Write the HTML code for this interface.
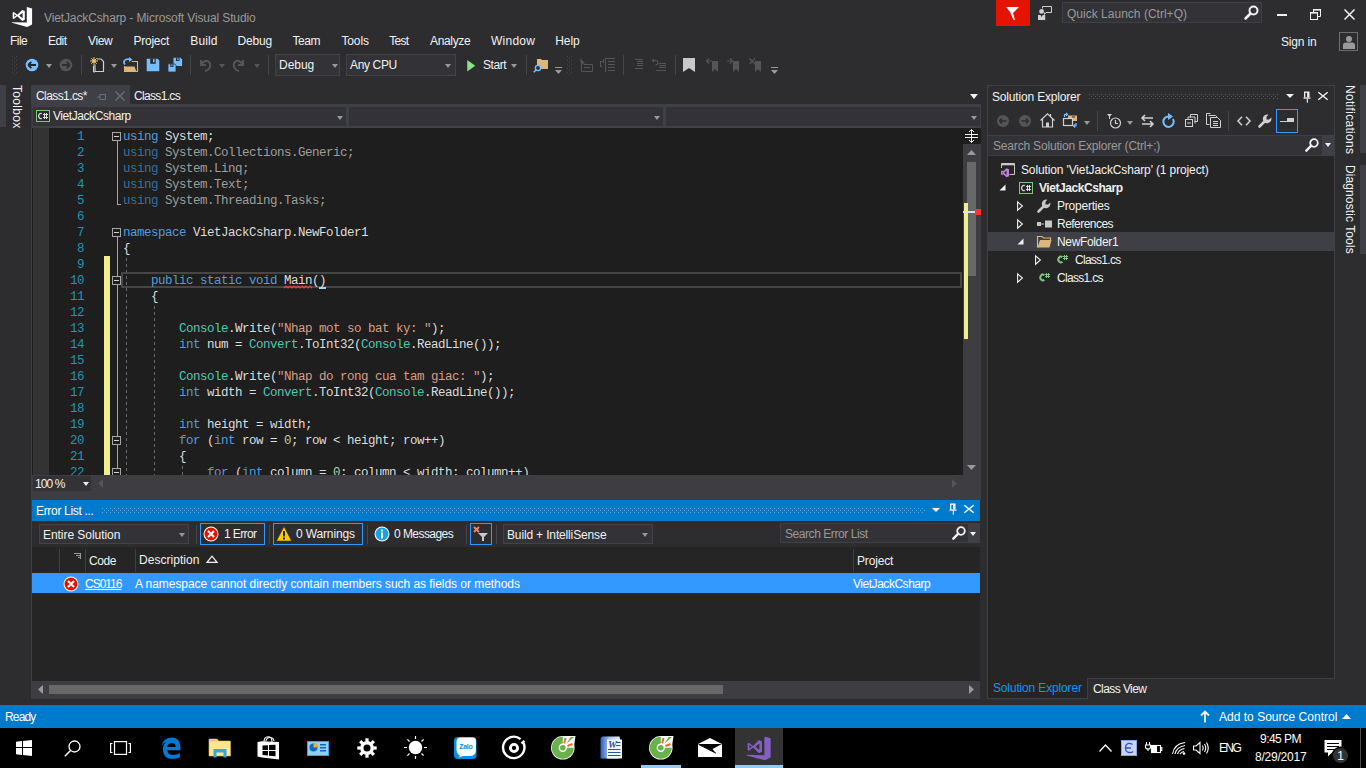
<!DOCTYPE html>
<html><head><meta charset="utf-8">
<style>
*{margin:0;padding:0;box-sizing:border-box}
html,body{width:1366px;height:768px;overflow:hidden;background:#2d2d30;font-family:"Liberation Sans",sans-serif;font-size:12px;color:#f1f1f1}
.a{position:absolute}
.t{position:absolute;white-space:nowrap;line-height:1}
svg{position:absolute;overflow:visible}
.code{position:absolute;left:123px;top:128px;font-family:"Liberation Mono",monospace;font-size:12.5px;letter-spacing:-0.5px;line-height:16px;color:#dcdcdc;white-space:pre}
.k{color:#569cd6}.ty{color:#4ec9b0}.s{color:#d69d85}.n{color:#b5cea8}.dk{color:#3a6e9c}.dp{color:#9e9e9e}
.ln{position:absolute;left:40px;width:44px;text-align:right;font-family:"Liberation Mono",monospace;font-size:12.5px;letter-spacing:-0.5px;line-height:16px;color:#2b91af;white-space:pre}
</style></head><body>

<svg style="left:8px;top:4px" width="30" height="26" viewBox="0 0 30 26"><path fill="#fff" fill-rule="evenodd" d="M18.8 2.9 L24.1 4.4 L24.1 20.6 L19.2 22.9 L3.9 18.8 L3.9 18.2 L18.8 18.6 Z M4.7 8.6 L5.8 8.1 L9.3 10.8 L14.2 5.9 L16.8 7.1 L16.8 15.8 L14.2 16.9 L9.3 12.2 L5.8 14.9 L4.7 14.4 Z M6.3 9.9 L8.2 11.5 L6.3 13.1 Z M14.6 8.7 L14.6 14.2 L11.2 11.5 Z"/></svg>
<div class="t" style="left:44px;top:11.84px;font-size:12px;color:#999999;letter-spacing:-0.119px;">VietJackCsharp - Microsoft Visual Studio</div>
<div class="a" style="left:996px;top:0px;width:34px;height:26px;background:#e51400;"></div>
<svg style="left:1005px;top:6px" width="15" height="15" viewBox="0 0 15 15"><path fill="#fff" d="M1 1 H14 L8 7 L10 14 L8.5 14 L5 6 Z"/></svg>
<svg style="left:1037px;top:5px" width="16" height="16" viewBox="0 0 16 16"><circle cx="4.6" cy="6.4" r="2.4" fill="#d0d0d0"/><path d="M1 10 H3.5 L4.6 12 L5.7 10 H8.2 V15 H1 Z" fill="#d0d0d0"/><path d="M5.5 3.5 V1.5 H14.5 V7.5 H9 L7.5 9.5 V7.5" fill="none" stroke="#d0d0d0" stroke-width="1"/></svg>
<div class="a" style="left:1062px;top:2px;width:200px;height:21px;background:#333337;border:1px solid #3f3f46;"></div>
<div class="t" style="left:1067px;top:7.84px;font-size:12px;color:#999999;letter-spacing:0.014px;">Quick Launch (Ctrl+Q)</div>
<svg style="left:1244px;top:5px" width="15" height="15" viewBox="0 0 15 15"><circle cx="9.5" cy="5.5" r="4" fill="none" stroke="#f1f1f1" stroke-width="2"/><path d="M6.5 8.5 L1.5 13.5" stroke="#f1f1f1" stroke-width="2.5" stroke-linecap="round"/></svg>
<div class="a" style="left:1277px;top:14px;width:10px;height:2px;background:#f1f1f1;"></div>
<svg style="left:1310px;top:9px" width="11" height="11" viewBox="0 0 11 11"><path d="M3.5 3 V0.5 H10.5 V7.5 H8" fill="none" stroke="#f1f1f1" stroke-width="1"/><rect x="3" y="0" width="8" height="1.6" fill="#f1f1f1"/><rect x="0.5" y="3.5" width="7" height="7" fill="none" stroke="#f1f1f1" stroke-width="1"/><rect x="0" y="3" width="8" height="1.6" fill="#f1f1f1"/></svg>
<svg style="left:1344px;top:9px" width="11" height="11" viewBox="0 0 11 11"><path d="M0.5 0.5 L10.5 10.5 M10.5 0.5 L0.5 10.5" stroke="#f1f1f1" stroke-width="1.5"/></svg>
<div class="t" style="left:10px;top:34.84px;font-size:12px;color:#f1f1f1;letter-spacing:-0.554px;">File</div>
<div class="t" style="left:48px;top:34.84px;font-size:12px;color:#f1f1f1;letter-spacing:-0.548px;">Edit</div>
<div class="t" style="left:88px;top:34.84px;font-size:12px;color:#f1f1f1;letter-spacing:-0.376px;">View</div>
<div class="t" style="left:133.5px;top:34.84px;font-size:12px;color:#f1f1f1;letter-spacing:-0.252px;">Project</div>
<div class="t" style="left:190.3px;top:34.84px;font-size:12px;color:#f1f1f1;letter-spacing:0.123px;">Build</div>
<div class="t" style="left:237.6px;top:34.84px;font-size:12px;color:#f1f1f1;letter-spacing:-0.172px;">Debug</div>
<div class="t" style="left:292.5px;top:34.84px;font-size:12px;color:#f1f1f1;letter-spacing:-0.449px;">Team</div>
<div class="t" style="left:341.4px;top:34.84px;font-size:12px;color:#f1f1f1;letter-spacing:-0.103px;">Tools</div>
<div class="t" style="left:389.2px;top:34.84px;font-size:12px;color:#f1f1f1;letter-spacing:-0.691px;">Test</div>
<div class="t" style="left:430px;top:34.84px;font-size:12px;color:#f1f1f1;letter-spacing:-0.336px;">Analyze</div>
<div class="t" style="left:491px;top:34.84px;font-size:12px;color:#f1f1f1;letter-spacing:0.257px;">Window</div>
<div class="t" style="left:555.3px;top:34.84px;font-size:12px;color:#f1f1f1;letter-spacing:-0.102px;">Help</div>
<div class="t" style="left:1281px;top:36.34px;font-size:12px;color:#f1f1f1;letter-spacing:-0.170px;">Sign in</div>
<div class="a" style="left:1339px;top:32px;width:19px;height:19px;background:transparent;border:1px solid #6d6d70;"></div>
<svg style="left:1342px;top:35px" width="14" height="14" viewBox="0 0 14 14"><circle cx="7" cy="4" r="3" fill="#9a9a9a"/><path d="M1 14 V10 Q1 7.5 4 7.5 H10 Q13 7.5 13 10 V14 Z" fill="#9a9a9a"/></svg>
<svg style="left:12px;top:56px" width="6" height="18" fill="#46464a"><rect x="0" y="0" width="1" height="1"/><rect x="4" y="0" width="1" height="1"/><rect x="2" y="2" width="1" height="1"/><rect x="0" y="4" width="1" height="1"/><rect x="4" y="4" width="1" height="1"/><rect x="2" y="6" width="1" height="1"/><rect x="0" y="8" width="1" height="1"/><rect x="4" y="8" width="1" height="1"/><rect x="2" y="10" width="1" height="1"/><rect x="0" y="12" width="1" height="1"/><rect x="4" y="12" width="1" height="1"/><rect x="2" y="14" width="1" height="1"/><rect x="0" y="16" width="1" height="1"/><rect x="4" y="16" width="1" height="1"/><rect x="2" y="18" width="1" height="1"/></svg>
<svg style="left:25px;top:58px" width="14" height="14" viewBox="0 0 14 14"><circle cx="7" cy="7" r="6.3" fill="#75beff"/><path d="M3.2 7 H11 M3.2 7 L6.3 3.9 M3.2 7 L6.3 10.1" stroke="#252526" stroke-width="1.8" fill="none"/></svg>
<svg style="left:46px;top:64px" width="6" height="4" viewBox="0 0 6 3.5" preserveAspectRatio="none"><path d="M0 0 H6 L3 3.5 Z" fill="#999999"/></svg>
<svg style="left:59px;top:58px" width="14" height="14" viewBox="0 0 14 14"><circle cx="7" cy="7" r="6.3" fill="#555555"/><path d="M10.8 7 H3 M10.8 7 L7.7 3.9 M10.8 7 L7.7 10.1" stroke="#2d2d30" stroke-width="1.8" fill="none"/></svg>
<div class="a" style="left:81px;top:55px;width:1px;height:20px;background:#46464a;"></div>
<svg style="left:90px;top:57px" width="15" height="16" viewBox="0 0 15 16"><path d="M5 7.5 V14.5 H13.5 V4.5 L11 2 H7" fill="#252526" stroke="#d0d0d0" stroke-width="1.2"/><path d="M3.5 8.5 V15 H5" fill="none" stroke="#d0d0d0" stroke-width="1"/><path d="M4 0 V8 M0 4 H8 M1.2 1.2 L6.8 6.8 M6.8 1.2 L1.2 6.8" stroke="#f0c064" stroke-width="1"/><circle cx="4" cy="4" r="1.8" fill="#f0c064"/></svg>
<svg style="left:111px;top:64px" width="6" height="4" viewBox="0 0 6 3.5" preserveAspectRatio="none"><path d="M0 0 H6 L3 3.5 Z" fill="#999999"/></svg>
<svg style="left:118px;top:52px" width="70" height="26" viewBox="0 0 70 26"><path d="M13.8 9.5 H19.5 V19.5 H6.5 V14" fill="none" stroke="#dcb67a" stroke-width="1.1"/><path d="M6 14.5 H16.5 L18.5 19.8 H7.5 Z" fill="#dcb67a"/><path d="M7 12.5 Q5 10.5 6.5 8.5 Q8.5 6.5 12.5 7.5" fill="none" stroke="#75beff" stroke-width="1.6"/><path d="M11 5 L14.5 7.8 L11 10 Z" fill="#75beff"/><path d="M28.7 6.7 H39.5 L41.3 8.5 V19.2 H28.7 Z" fill="#75beff"/><rect x="32.2" y="6.7" width="5.5" height="5.1" fill="#2d2d30"/><rect x="35" y="7.2" width="1.6" height="3" fill="#75beff"/><path d="M55.5 5.8 H62.5 L64.1 7.4 V14 H55.5 Z" fill="#75beff"/><rect x="58" y="5.8" width="3.5" height="3.2" fill="#2d2d30"/><rect x="59.3" y="6.2" width="1.2" height="2" fill="#75beff"/><path d="M50 11.8 H56.5 L58 13.3 V20 H50 Z" fill="#75beff" stroke="#2d2d30" stroke-width="0.8"/><rect x="52.3" y="12" width="3.2" height="3" fill="#2d2d30"/><rect x="53.4" y="12.4" width="1.1" height="1.8" fill="#75beff"/></svg>
<div class="a" style="left:190px;top:55px;width:1px;height:20px;background:#46464a;"></div>
<svg style="left:198px;top:58px" width="14" height="14" viewBox="0 0 14 14"><path d="M3 2 V7 H8 M3 7 Q6 2 9.5 3 Q13 4.5 12 9 Q11 12 7 13" fill="none" stroke="#555555" stroke-width="2"/></svg>
<svg style="left:219px;top:64px" width="6" height="4" viewBox="0 0 6 3.5" preserveAspectRatio="none"><path d="M0 0 H6 L3 3.5 Z" fill="#555555"/></svg>
<svg style="left:232px;top:58px" width="14" height="14" viewBox="0 0 14 14"><path d="M11 2 V7 H6 M11 7 Q8 2 4.5 3 Q1 4.5 2 9 Q3 12 7 13" fill="none" stroke="#555555" stroke-width="2"/></svg>
<svg style="left:254px;top:64px" width="6" height="4" viewBox="0 0 6 3.5" preserveAspectRatio="none"><path d="M0 0 H6 L3 3.5 Z" fill="#555555"/></svg>
<div class="a" style="left:268px;top:55px;width:1px;height:20px;background:#46464a;"></div>
<div class="a" style="left:275px;top:54px;width:65px;height:22px;background:#333337;border:1px solid #434346;"></div>
<div class="t" style="left:279px;top:58.84px;font-size:12px;color:#f1f1f1;letter-spacing:-0.022px;">Debug</div>
<svg style="left:332px;top:64px" width="6" height="4" viewBox="0 0 6 3.5" preserveAspectRatio="none"><path d="M0 0 H6 L3 3.5 Z" fill="#999999"/></svg>
<div class="a" style="left:346px;top:54px;width:110px;height:22px;background:#333337;border:1px solid #434346;"></div>
<div class="t" style="left:350px;top:58.84px;font-size:12px;color:#f1f1f1;letter-spacing:-0.347px;">Any CPU</div>
<svg style="left:445px;top:64px" width="6" height="4" viewBox="0 0 6 3.5" preserveAspectRatio="none"><path d="M0 0 H6 L3 3.5 Z" fill="#999999"/></svg>
<svg style="left:467px;top:59.5px" width="8.5" height="11.5" viewBox="0 0 9 13"><path d="M0 0 L9 6.5 L0 13 Z" fill="#8ae28a"/></svg>
<div class="t" style="left:483px;top:58.84px;font-size:12px;color:#f1f1f1;letter-spacing:-0.452px;">Start</div>
<svg style="left:511px;top:64px" width="6" height="4" viewBox="0 0 6 3.5" preserveAspectRatio="none"><path d="M0 0 H6 L3 3.5 Z" fill="#999999"/></svg>
<div class="a" style="left:526px;top:55px;width:1px;height:20px;background:#46464a;"></div>
<svg style="left:533px;top:57px" width="16" height="16" viewBox="0 0 16 16"><path d="M4 2 H8 L9 3 H15 V12 H4 Z" fill="#dcb67a"/><circle cx="5" cy="11" r="2.6" fill="#2d2d30" stroke="#75beff" stroke-width="1.4"/><path d="M3.2 12.8 L0.8 15.2" stroke="#75beff" stroke-width="1.6"/></svg>
<svg style="left:555px;top:67px" width="7" height="8" viewBox="0 0 7 8"><rect x="0" y="0" width="7" height="1" fill="#999"/><path d="M0 3 H7 L3.5 7 Z" fill="#999"/></svg>
<svg style="left:567px;top:56px" width="6" height="18" fill="#46464a"><rect x="0" y="0" width="1" height="1"/><rect x="4" y="0" width="1" height="1"/><rect x="2" y="2" width="1" height="1"/><rect x="0" y="4" width="1" height="1"/><rect x="4" y="4" width="1" height="1"/><rect x="2" y="6" width="1" height="1"/><rect x="0" y="8" width="1" height="1"/><rect x="4" y="8" width="1" height="1"/><rect x="2" y="10" width="1" height="1"/><rect x="0" y="12" width="1" height="1"/><rect x="4" y="12" width="1" height="1"/><rect x="2" y="14" width="1" height="1"/><rect x="0" y="16" width="1" height="1"/><rect x="4" y="16" width="1" height="1"/><rect x="2" y="18" width="1" height="1"/></svg>
<svg style="left:580px;top:58px" width="14" height="14" viewBox="0 0 14 14"><path d="M0 0 L5 5.5 L2.5 5.5 L1.5 8 Z" fill="#555555"/><path d="M1.5 5 V13.5 H12.5 V6.5 H3.5" fill="none" stroke="#555555" stroke-width="1"/><rect x="4" y="9" width="6" height="1" fill="#555555"/></svg>
<svg style="left:600px;top:58px" width="16" height="14" viewBox="0 0 16 14" fill="#555555"><rect x="0" y="3" width="1" height="6"/><rect x="0" y="3" width="3" height="1"/><rect x="0" y="8" width="2" height="1"/><rect x="3" y="1" width="1" height="4"/><rect x="5" y="0" width="1" height="14"/><rect x="6" y="0" width="9" height="1"/><rect x="8" y="3" width="7" height="1"/><rect x="8" y="6" width="7" height="1"/><rect x="8" y="9" width="7" height="1"/><rect x="8" y="12" width="7" height="1"/></svg>
<div class="a" style="left:623px;top:55px;width:1px;height:20px;background:#46464a;"></div>
<svg style="left:633px;top:59px" width="11" height="12" viewBox="0 0 11 12" fill="#555555"><rect x="2" y="0" width="8" height="1"/><rect x="4" y="2" width="6" height="1"/><rect x="4" y="4" width="6" height="1"/><rect x="4" y="6" width="6" height="1"/><rect x="2" y="9" width="8" height="1"/></svg>
<svg style="left:652px;top:58px" width="15" height="14" viewBox="0 0 15 14"><path d="M2 4 L0.5 2.5 L2 1 M0.8 2.5 H4 Q6 2.5 6 4.5 Q6 6.5 3.5 7" fill="none" stroke="#555555" stroke-width="1.1"/><g fill="#555555"><rect x="7" y="5" width="7" height="1"/><rect x="7" y="7" width="7" height="1"/><rect x="7" y="9" width="7" height="1"/><rect x="4" y="12" width="10" height="1"/></g></svg>
<div class="a" style="left:675px;top:55px;width:1px;height:20px;background:#46464a;"></div>
<svg style="left:683px;top:58px" width="12" height="14" viewBox="0 0 12 14"><path d="M0 0 H12 V14 L6 10 L0 14 Z" fill="#c8c8c8"/></svg>
<svg style="left:706px;top:58px" width="14" height="14" viewBox="0 0 14 14"><path d="M6 3 H12 V14 L9 11 L6 14 Z" fill="#555555"/><path d="M0.5 3 H6 M0.5 3 L3 0.5 M0.5 3 L3 5.5" stroke="#555555" stroke-width="1.2" fill="none"/></svg>
<svg style="left:727px;top:58px" width="14" height="14" viewBox="0 0 14 14"><path d="M6 3 H12 V14 L9 11 L6 14 Z" fill="#555555"/><path d="M0 3 H5.5 M5.5 3 L3 0.5 M5.5 3 L3 5.5" stroke="#555555" stroke-width="1.2" fill="none"/></svg>
<svg style="left:749px;top:58px" width="14" height="14" viewBox="0 0 14 14"><path d="M6 3 H12 V14 L9 11 L6 14 Z" fill="#555555"/><path d="M0.5 0.5 L6 6 M6 0.5 L0.5 6" stroke="#555555" stroke-width="1.2" fill="none"/></svg>
<svg style="left:771px;top:67px" width="7" height="8" viewBox="0 0 7 8"><rect x="0" y="0" width="7" height="1" fill="#999"/><path d="M0 3 H7 L3.5 7 Z" fill="#999"/></svg>
<div class="a" style="left:0px;top:85px;width:6px;height:42px;background:#3f3f46;"></div>
<div class="t" style="left:3.5px;top:85px;width:22px;height:42px;"><div style="position:absolute;left:22px;top:0;transform-origin:0 0;transform:rotate(90deg);font-size:12px;line-height:12px;color:#f1f1f1;white-space:nowrap;padding-top:3px;letter-spacing:0.3px">Toolbox</div></div>
<div class="a" style="left:31px;top:85px;width:99px;height:19px;background:#3f3f46;"></div>
<div class="t" style="left:36px;top:89.84px;font-size:12px;color:#f1f1f1;letter-spacing:-0.590px;">Class1.cs*</div>
<svg style="left:97px;top:93px" width="9" height="8" viewBox="0 0 9 8"><path d="M0 4 H3 M3 1.5 V6.5 M3 1.5 H8.5 V6.5 H3" fill="none" stroke="#707070" stroke-width="1"/></svg>
<svg style="left:115px;top:91px" width="10" height="10" viewBox="0 0 10 10"><path d="M0.5 0.5 L9.5 9.5 M9.5 0.5 L0.5 9.5" stroke="#707070" stroke-width="1.3"/></svg>
<div class="t" style="left:134px;top:89.84px;font-size:12px;color:#f1f1f1;letter-spacing:-0.664px;">Class1.cs</div>
<svg style="left:970px;top:94px" width="8" height="5" viewBox="0 0 8 5"><path d="M0 0 H8 L4 5 Z" fill="#f1f1f1"/></svg>
<div class="a" style="left:31px;top:104px;width:950px;height:24px;background:#3f3f46;"></div>
<div class="a" style="left:31px;top:104px;width:1px;height:24px;background:#3a3a3e;"></div>
<div class="a" style="left:33px;top:107px;width:313px;height:19px;background:#333337;"></div>
<div class="a" style="left:349px;top:107px;width:314px;height:19px;background:#333337;"></div>
<div class="a" style="left:666px;top:107px;width:314px;height:19px;background:#333337;"></div>
<svg style="left:36px;top:110px" width="14" height="12" viewBox="0 0 14 12"><rect x="0.5" y="0.5" width="13" height="11" fill="#2d2d30" stroke="#7dc67d" stroke-width="1"/><path d="M5.8 3.6 A2.3 2.6 0 1 0 5.8 8.4" fill="none" stroke="#d8d8d8" stroke-width="1.3"/><g fill="#e0e0e0"><rect x="8" y="3" width="1" height="6"/><rect x="10" y="3" width="1" height="6"/><rect x="7" y="4" width="5" height="1"/><rect x="7" y="7" width="5" height="1"/></g></svg>
<div class="t" style="left:53px;top:109.84px;font-size:12px;color:#f1f1f1;letter-spacing:-0.434px;">VietJackCsharp</div>
<svg style="left:337px;top:116px" width="6" height="4" viewBox="0 0 6 3.5" preserveAspectRatio="none"><path d="M0 0 H6 L3 3.5 Z" fill="#999999"/></svg>
<svg style="left:654px;top:116px" width="6" height="4" viewBox="0 0 6 3.5" preserveAspectRatio="none"><path d="M0 0 H6 L3 3.5 Z" fill="#999999"/></svg>
<svg style="left:971px;top:116px" width="6" height="4" viewBox="0 0 6 3.5" preserveAspectRatio="none"><path d="M0 0 H6 L3 3.5 Z" fill="#999999"/></svg>
<div class="a" style="left:32px;top:128px;width:931px;height:347px;background:#1e1e1e;"></div>
<div class="a" style="left:33px;top:128px;width:16px;height:347px;background:#333333;"></div>
<div class="a" style="left:31px;top:128px;width:1px;height:372px;background:#3f3f46;"></div>
<div class="a" style="left:104px;top:256px;width:6px;height:219px;background:#efef90;"></div>
<div class="a" style="left:117px;top:141px;width:1px;height:64px;background:#a5a5a5;"></div>
<div class="a" style="left:117px;top:204px;width:4px;height:1px;background:#a5a5a5;"></div>
<div class="a" style="left:117px;top:237px;width:1px;height:238px;background:#a5a5a5;"></div>
<svg style="left:112px;top:132px" width="9" height="9" viewBox="0 0 9 9"><rect x="0.5" y="0.5" width="8" height="8" fill="#1e1e1e" stroke="#a5a5a5"/><rect x="2" y="4" width="5" height="1" fill="#d0d0d0"/></svg>
<svg style="left:112px;top:228px" width="9" height="9" viewBox="0 0 9 9"><rect x="0.5" y="0.5" width="8" height="8" fill="#1e1e1e" stroke="#a5a5a5"/><rect x="2" y="4" width="5" height="1" fill="#d0d0d0"/></svg>
<svg style="left:112px;top:276px" width="9" height="9" viewBox="0 0 9 9"><rect x="0.5" y="0.5" width="8" height="8" fill="#1e1e1e" stroke="#a5a5a5"/><rect x="2" y="4" width="5" height="1" fill="#d0d0d0"/></svg>
<svg style="left:112px;top:436px" width="9" height="9" viewBox="0 0 9 9"><rect x="0.5" y="0.5" width="8" height="8" fill="#1e1e1e" stroke="#a5a5a5"/><rect x="2" y="4" width="5" height="1" fill="#d0d0d0"/></svg>
<svg style="left:112px;top:468px" width="9" height="9" viewBox="0 0 9 9"><rect x="0.5" y="0.5" width="8" height="8" fill="#1e1e1e" stroke="#a5a5a5"/><rect x="2" y="4" width="5" height="1" fill="#d0d0d0"/></svg>
<svg style="left:126px;top:258px" width="1" height="217"><line x1="0.5" y1="0" x2="0.5" y2="217" stroke="#a5a5a5" stroke-width="1" stroke-dasharray="3,3" opacity="0.55"/></svg>
<svg style="left:154px;top:306px" width="1" height="169"><line x1="0.5" y1="0" x2="0.5" y2="169" stroke="#a5a5a5" stroke-width="1" stroke-dasharray="3,3" opacity="0.55"/></svg>
<svg style="left:182px;top:466px" width="1" height="9"><line x1="0.5" y1="0" x2="0.5" y2="9" stroke="#a5a5a5" stroke-width="1" stroke-dasharray="3,3" opacity="0.55"/></svg>
<div class="a" style="left:121px;top:272px;width:841px;height:16px;border:2px solid #464646;"></div>
<div class="a" style="left:32px;top:128px;width:931px;height:347px;overflow:hidden">
<div class="code" style="left:91px;top:1.4px"><span class="k">using</span> System;
<span class="dk">using</span> <span class="dp">System.Collections.Generic;</span>
<span class="dk">using</span> <span class="dp">System.Linq;</span>
<span class="dk">using</span> <span class="dp">System.Text;</span>
<span class="dk">using</span> <span class="dp">System.Threading.Tasks;</span>

<span class="k">namespace</span> VietJackCsharp.NewFolder1
{

    <span class="k">public</span> <span class="k">static</span> <span class="k">void</span> Main()
    {

        <span class="ty">Console</span>.Write(<span class="s">"Nhap mot so bat ky: "</span>);
        <span class="k">int</span> num = <span class="ty">Convert</span>.ToInt32(<span class="ty">Console</span>.ReadLine());

        <span class="ty">Console</span>.Write(<span class="s">"Nhap do rong cua tam giac: "</span>);
        <span class="k">int</span> width = <span class="ty">Convert</span>.ToInt32(<span class="ty">Console</span>.ReadLine());

        <span class="k">int</span> height = width;
        <span class="k">for</span> (<span class="k">int</span> row = <span class="n">0</span>; row &lt; height; row++)
        {
            <span class="k">for</span> (<span class="k">int</span> column = <span class="n">0</span>; column &lt; width; column++)</div>
<div class="ln" style="left:0px;top:1.4px;width:52px">1
2
3
4
5
6
7
8
9
10
11
12
13
14
15
16
17
18
19
20
21
22</div>
</div>
<svg style="left:284px;top:285px" width="28" height="4" viewBox="0 0 28 4"><path d="M0 3 L2 1 L4 3 L6 1 L8 3 L10 1 L12 3 L14 1 L16 3 L18 1 L20 3 L22 1 L24 3 L26 1 L28 3" fill="none" stroke="#fc3e3e" stroke-width="1.2"/></svg>
<div class="a" style="left:319px;top:287px;width:7px;height:1.5px;background:#a8d4f0;"></div>
<div class="a" style="left:963px;top:128px;width:18px;height:347px;background:#3e3e42;"></div>
<div class="a" style="left:963px;top:128px;width:18px;height:16px;background:#1e1e1e;"></div>
<svg style="left:965px;top:129px" width="13" height="14" viewBox="0 0 13 14"><path d="M0 5.5 H13 M0 8.5 H13 M6.5 0.5 V13.5 M4 3 L6.5 0.5 L9 3 M4 11 L6.5 13.5 L9 11" fill="none" stroke="#f1f1f1" stroke-width="1"/></svg>
<svg style="left:967px;top:150px" width="9" height="5" viewBox="0 0 9 5"><path d="M0 5 L4.5 0 L9 5 Z" fill="#999999"/></svg>
<div class="a" style="left:967px;top:162px;width:9px;height:114px;background:#686868;"></div>
<div class="a" style="left:964px;top:203px;width:4px;height:136px;background:#efef90;"></div>
<div class="a" style="left:963px;top:211px;width:12px;height:2px;background:#e0e0e0;"></div>
<div class="a" style="left:975px;top:209px;width:6px;height:6px;background:#ff3333;"></div>
<svg style="left:967px;top:465px" width="9" height="5" viewBox="0 0 9 5"><path d="M0 0 L4.5 5 L9 0 Z" fill="#999999"/></svg>
<div class="a" style="left:32px;top:475px;width:949px;height:25px;background:#3e3e42;"></div>
<div class="a" style="left:33px;top:476px;width:58px;height:15px;background:#333337;"></div>
<div class="t" style="left:35px;top:477.84px;font-size:12px;color:#f1f1f1;letter-spacing:-0.914px;">100 %</div>
<svg style="left:83px;top:482px" width="6" height="4" viewBox="0 0 6 3.5" preserveAspectRatio="none"><path d="M0 0 H6 L3 3.5 Z" fill="#f1f1f1"/></svg>
<svg style="left:98px;top:479px" width="5" height="9" viewBox="0 0 5 9"><path d="M5 0 L0 4.5 L5 9 Z" fill="#555555"/></svg>
<svg style="left:952px;top:479px" width="5" height="9" viewBox="0 0 5 9"><path d="M0 0 L5 4.5 L0 9 Z" fill="#555555"/></svg>
<div class="a" style="left:32px;top:500px;width:948px;height:21px;background:#007acc;"></div>
<div class="t" style="left:36px;top:504.84px;font-size:12px;color:#ffffff;letter-spacing:-0.321px;">Error List ...</div>
<svg style="left:102px;top:508px" width="823" height="5"><defs><pattern id="dp1" width="4" height="4" patternUnits="userSpaceOnUse"><rect x="0" y="0" width="1" height="1" fill="#5aa8e0"/><rect x="2" y="2" width="1" height="1" fill="#5aa8e0"/></pattern></defs><rect width="823" height="5" fill="url(#dp1)"/></svg>
<svg style="left:932px;top:508px" width="8" height="4" viewBox="0 0 6 3.5" preserveAspectRatio="none"><path d="M0 0 H6 L3 3.5 Z" fill="#ffffff"/></svg>
<svg style="left:949px;top:503px" width="8" height="12" viewBox="0 0 8 12"><path d="M1 0.5 H6.5 V6.5 H1 Z" fill="#ffffff"/><rect x="2.3" y="1.8" width="1.8" height="4.7" fill="#007acc"/><rect x="0.5" y="6.5" width="7" height="1.2" fill="#ffffff"/><rect x="3.8" y="7.7" width="1.1" height="4" fill="#ffffff"/></svg>
<svg style="left:964px;top:505px" width="10" height="8" viewBox="0 0 10 8"><path d="M0.3 0.3 L9.7 7.7 M9.7 0.3 L0.3 7.7" stroke="#ffffff" stroke-width="1.4"/></svg>
<div class="a" style="left:32px;top:521px;width:948px;height:26px;background:#2d2d30;"></div>
<div class="a" style="left:39px;top:524px;width:150px;height:20px;background:#333337;border:1px solid #434346;"></div>
<div class="t" style="left:43px;top:528.84px;font-size:12px;color:#f1f1f1;letter-spacing:-0.048px;">Entire Solution</div>
<svg style="left:179px;top:533px" width="6" height="4" viewBox="0 0 6 3.5" preserveAspectRatio="none"><path d="M0 0 H6 L3 3.5 Z" fill="#999999"/></svg>
<div class="a" style="left:196px;top:525px;width:1px;height:19px;background:#46464a;"></div>
<div class="a" style="left:200px;top:523px;width:65px;height:22px;background:transparent;border:1px solid #3399ff;"></div>
<svg style="left:203px;top:526px" width="16" height="16" viewBox="0 0 16 16"><circle cx="8" cy="8" r="7.5" fill="#ffffff"/><circle cx="8" cy="8" r="6.5" fill="#e51400"/><path d="M5 5 L11 11 M11 5 L5 11" stroke="#ffffff" stroke-width="2"/></svg>
<div class="t" style="left:224px;top:527.84px;font-size:12px;color:#f1f1f1;letter-spacing:-0.613px;">1 Error</div>
<div class="a" style="left:269px;top:525px;width:1px;height:19px;background:#46464a;"></div>
<div class="a" style="left:273px;top:523px;width:90px;height:22px;background:transparent;border:1px solid #3399ff;"></div>
<svg style="left:276px;top:526px" width="16" height="16" viewBox="0 0 16 16"><path d="M8 0.5 L15.5 15 H0.5 Z" fill="#ffcc00" stroke="#2d2d30" stroke-width="0.5"/><rect x="7" y="5" width="2" height="5.5" fill="#1e1e1e"/><rect x="7" y="11.5" width="2" height="2" fill="#1e1e1e"/></svg>
<div class="t" style="left:296px;top:527.84px;font-size:12px;color:#f1f1f1;letter-spacing:-0.138px;">0 Warnings</div>
<div class="a" style="left:367px;top:525px;width:1px;height:19px;background:#46464a;"></div>
<svg style="left:374px;top:526px" width="16" height="16" viewBox="0 0 16 16"><circle cx="8" cy="8" r="7.5" fill="#ffffff"/><circle cx="8" cy="8" r="6.5" fill="#1ba1e2"/><rect x="7" y="6.5" width="2" height="6" fill="#ffffff"/><rect x="7" y="3.5" width="2" height="2" fill="#ffffff"/></svg>
<div class="t" style="left:394px;top:527.84px;font-size:12px;color:#f1f1f1;letter-spacing:-0.555px;">0 Messages</div>
<div class="a" style="left:466px;top:525px;width:1px;height:19px;background:#46464a;"></div>
<div class="a" style="left:470px;top:523px;width:22px;height:22px;background:transparent;border:1px solid #3399ff;"></div>
<svg style="left:473px;top:526px" width="16" height="16" viewBox="0 0 16 16"><path d="M1 1 L6 6 M6 1 L1 6" stroke="#f48771" stroke-width="1.8"/><path d="M5 7 H15 L11 11 V15 L9 15 V11 Z" fill="#c8c8c8"/></svg>
<div class="a" style="left:496px;top:525px;width:1px;height:19px;background:#46464a;"></div>
<div class="a" style="left:503px;top:524px;width:150px;height:20px;background:#333337;border:1px solid #434346;"></div>
<div class="t" style="left:507px;top:528.84px;font-size:12px;color:#f1f1f1;letter-spacing:-0.149px;">Build + IntelliSense</div>
<svg style="left:642px;top:533px" width="6" height="4" viewBox="0 0 6 3.5" preserveAspectRatio="none"><path d="M0 0 H6 L3 3.5 Z" fill="#999999"/></svg>
<div class="a" style="left:780px;top:523px;width:188px;height:20px;background:#333337;border:1px solid #3f3f46;border-right:none"></div>
<div class="a" style="left:968px;top:523px;width:12px;height:20px;background:#3f3f46;"></div>
<div class="t" style="left:785px;top:527.84px;font-size:12px;color:#999999;letter-spacing:-0.437px;">Search Error List</div>
<svg style="left:952px;top:526px" width="14" height="14" viewBox="0 0 14 14"><circle cx="9" cy="5" r="3.8" fill="none" stroke="#f1f1f1" stroke-width="1.8"/><path d="M6.3 7.7 L1.3 12.7" stroke="#f1f1f1" stroke-width="2.4" stroke-linecap="round"/></svg>
<svg style="left:970px;top:532px" width="6" height="4" viewBox="0 0 6 3.5" preserveAspectRatio="none"><path d="M0 0 H6 L3 3.5 Z" fill="#f1f1f1"/></svg>
<div class="a" style="left:32px;top:547px;width:948px;height:26px;background:#252526;"></div>
<div class="a" style="left:59px;top:549px;width:1px;height:23px;background:#3f3f46;"></div>
<div class="a" style="left:85px;top:549px;width:1px;height:23px;background:#3f3f46;"></div>
<div class="a" style="left:135px;top:549px;width:1px;height:23px;background:#3f3f46;"></div>
<div class="a" style="left:853px;top:549px;width:1px;height:23px;background:#3f3f46;"></div>
<svg style="left:74px;top:553px" width="7" height="6" viewBox="0 0 7 6" fill="#999"><rect x="0" y="0" width="7" height="1"/><rect x="2" y="2" width="5" height="1"/><rect x="4" y="4" width="3" height="1"/><rect x="6" y="0" width="1" height="6"/></svg>
<div class="t" style="left:89px;top:554.84px;font-size:12px;color:#f1f1f1;letter-spacing:-0.438px;">Code</div>
<div class="t" style="left:139px;top:553.84px;font-size:12px;color:#f1f1f1;letter-spacing:0.035px;">Description</div>
<svg style="left:206px;top:555px" width="12" height="8" viewBox="0 0 12 8"><path d="M1 7.3 L6 1.2 L11 7.3 Z" fill="none" stroke="#f1f1f1" stroke-width="1.3"/></svg>
<div class="t" style="left:857px;top:554.84px;font-size:12px;color:#f1f1f1;letter-spacing:-0.169px;">Project</div>
<div class="a" style="left:32px;top:573px;width:948px;height:20px;background:#3399ff;"></div>
<svg style="left:63px;top:576px" width="16" height="16" viewBox="0 0 16 16"><circle cx="8" cy="8" r="7.5" fill="#ffffff"/><circle cx="8" cy="8" r="6.5" fill="#e51400"/><path d="M5 5 L11 11 M11 5 L5 11" stroke="#ffffff" stroke-width="2"/></svg>
<div class="t" style="left:85px;top:577.84px;font-size:12px;color:#ffffff;letter-spacing:-1.020px;text-decoration:underline;">CS0116</div>
<div class="t" style="left:135px;top:577.84px;font-size:12px;color:#ffffff;letter-spacing:-0.048px;">A namespace cannot directly contain members such as fields or methods</div>
<div class="t" style="left:853px;top:577.84px;font-size:12px;color:#ffffff;letter-spacing:-0.465px;">VietJackCsharp</div>
<div class="a" style="left:32px;top:593px;width:948px;height:88px;background:#252526;"></div>
<div class="a" style="left:32px;top:681px;width:948px;height:18px;background:#3e3e42;"></div>
<svg style="left:38px;top:685px" width="5" height="9" viewBox="0 0 5 9"><path d="M5 0 L0 4.5 L5 9 Z" fill="#999999"/></svg>
<div class="a" style="left:49px;top:685px;width:674px;height:9px;background:#686868;"></div>
<svg style="left:969px;top:685px" width="5" height="9" viewBox="0 0 5 9"><path d="M0 0 L5 4.5 L0 9 Z" fill="#999999"/></svg>
<div class="a" style="left:31px;top:500px;width:1px;height:199px;background:#3f3f46;"></div>
<div class="a" style="left:987px;top:85px;width:348px;height:614px;background:#2d2d30;border:1px solid #3f3f46;"></div>
<div class="t" style="left:992px;top:90.84px;font-size:12px;color:#f1f1f1;letter-spacing:-0.174px;">Solution Explorer</div>
<svg style="left:1089px;top:94px" width="189" height="5"><defs><pattern id="dp2" width="4" height="4" patternUnits="userSpaceOnUse"><rect x="0" y="0" width="1" height="1" fill="#5a5a5e"/><rect x="2" y="2" width="1" height="1" fill="#5a5a5e"/></pattern></defs><rect width="189" height="5" fill="url(#dp2)"/></svg>
<svg style="left:1286px;top:94px" width="8" height="4" viewBox="0 0 6 3.5" preserveAspectRatio="none"><path d="M0 0 H6 L3 3.5 Z" fill="#f1f1f1"/></svg>
<svg style="left:1302.5px;top:90.5px" width="8" height="12" viewBox="0 0 8 12"><path d="M1 0.5 H6.5 V6.5 H1 Z" fill="#f1f1f1"/><rect x="2.3" y="1.8" width="1.8" height="4.7" fill="#2d2d30"/><rect x="0.5" y="6.5" width="7" height="1.2" fill="#f1f1f1"/><rect x="3.8" y="7.7" width="1.1" height="4" fill="#f1f1f1"/></svg>
<svg style="left:1318px;top:92px" width="10" height="8" viewBox="0 0 10 8"><path d="M0.3 0.3 L9.7 7.7 M9.7 0.3 L0.3 7.7" stroke="#f1f1f1" stroke-width="1.4"/></svg>
<svg style="left:997px;top:115px" width="12" height="12" viewBox="0 0 12 12"><circle cx="6" cy="6" r="6" fill="#555555"/><path d="M2.5 6 H9.5 M2.5 6 L5 3.5 M2.5 6 L5 8.5" stroke="#2d2d30" stroke-width="1.6" fill="none"/></svg>
<svg style="left:1019px;top:115px" width="12" height="12" viewBox="0 0 12 12"><circle cx="6" cy="6" r="6" fill="#555555"/><path d="M9.5 6 H2.5 M9.5 6 L7 3.5 M9.5 6 L7 8.5" stroke="#2d2d30" stroke-width="1.6" fill="none"/></svg>
<svg style="left:1040px;top:113px" width="15" height="15" viewBox="0 0 15 15"><path d="M0.5 7.5 L7.5 0.8 L14.5 7.5 M2.5 6 V14 H12.5 V6 M10.5 4 V1" fill="none" stroke="#d0d0d0" stroke-width="1.2"/><rect x="6" y="9.5" width="3" height="4.5" fill="#d0d0d0"/></svg>
<svg style="left:1063px;top:113px" width="15" height="15" viewBox="0 0 15 15"><path d="M5 2.5 H14 V8 H5 Z" fill="#dcb67a"/><rect x="9" y="3.5" width="3" height="1" fill="#2d2d30"/><rect x="0.5" y="5.5" width="9" height="7" fill="#2d2d30" stroke="#d0d0d0" stroke-width="1.2"/><path d="M1.5 4 V1.5 H4 M3 0 L4.5 1.5 L3 3" stroke="#75beff" fill="none" stroke-width="1.2"/><path d="M13 10 V13 H10.5 M12 11.5 L10.5 13 L12 14.5" stroke="#75beff" fill="none" stroke-width="1.2"/></svg>
<svg style="left:1084px;top:121px" width="6" height="4" viewBox="0 0 6 3.5" preserveAspectRatio="none"><path d="M0 0 H6 L3 3.5 Z" fill="#999999"/></svg>
<div class="a" style="left:1097px;top:111px;width:1px;height:20px;background:#46464a;"></div>
<svg style="left:1107px;top:114px" width="14" height="15" viewBox="0 0 14 15"><path d="M0 0 H5 L2.5 3 Z M2 2 H3 V5 H2 Z" fill="#d0d0d0"/><circle cx="8.5" cy="9" r="5" fill="none" stroke="#d0d0d0" stroke-width="1.2"/><path d="M8.5 6 V9.5 H11" fill="none" stroke="#d0d0d0" stroke-width="1.2"/></svg>
<svg style="left:1127px;top:121px" width="6" height="4" viewBox="0 0 6 3.5" preserveAspectRatio="none"><path d="M0 0 H6 L3 3.5 Z" fill="#999999"/></svg>
<svg style="left:1141px;top:114px" width="13" height="14" viewBox="0 0 13 14"><path d="M12 4 H1 M4 1 L1 4 L4 7 M1 10 H12 M9 7 L12 10 L9 13" fill="none" stroke="#d0d0d0" stroke-width="1.6"/></svg>
<svg style="left:1162px;top:113px" width="14" height="15" viewBox="0 0 14 15"><path d="M11 6 A5.2 5.2 0 1 1 7 3.5" fill="none" stroke="#75beff" stroke-width="2"/><path d="M6 0 L11 3.5 L6 7 Z" fill="#75beff"/></svg>
<svg style="left:1185px;top:114px" width="13" height="13" viewBox="0 0 13 13" fill="none" stroke="#d0d0d0"><path d="M5.5 3.5 V0.5 H12.5 V7.5 H9.5 M3 6 V3 H10 V9.5"/><rect x="0.5" y="5.5" width="7" height="7" fill="#2d2d30"/><path d="M2 9 H6"/></svg>
<svg style="left:1206px;top:113px" width="15" height="15" viewBox="0 0 15 15" fill="none" stroke="#d0d0d0"><path d="M4.5 0.5 H0.5 V11.5 H3.5 M2.5 2.5 H9.5 L11 4"/><path d="M4.5 4.5 H11.5 L14.5 7.5 V14.5 H4.5 Z M7 8.5 H12 M7 10.5 H12 M7 12.5 H12"/></svg>
<div class="a" style="left:1228px;top:111px;width:1px;height:20px;background:#46464a;"></div>
<svg style="left:1237px;top:116px" width="14" height="10" viewBox="0 0 14 10"><path d="M5 0.8 L1 5 L5 9.2 M9 0.8 L13 5 L9 9.2" fill="none" stroke="#d0d0d0" stroke-width="1.5"/></svg>
<svg style="left:1258px;top:114px" width="14" height="14" viewBox="0 0 14 14"><path d="M1.5 12.5 L7 7" stroke="#d0d0d0" stroke-width="2.6" stroke-linecap="round"/><path d="M13.2 3.6 A4.3 4.3 0 1 1 10.4 0.8 L8.5 2.8 L8.5 5.5 L11.2 5.5 Z" fill="#d0d0d0"/></svg>
<div class="a" style="left:1276px;top:109px;width:22px;height:24px;background:transparent;border:1px solid #3399ff;"></div>
<div class="a" style="left:1280px;top:121px;width:8px;height:1px;background:#d0d0d0;"></div>
<div class="a" style="left:1287px;top:118px;width:7px;height:4px;background:#d0d0d0;"></div>
<div class="a" style="left:988px;top:135px;width:346px;height:20px;background:#333337;border-top:1px solid #3f3f46;"></div>
<div class="a" style="left:1322px;top:136px;width:12px;height:19px;background:#3f3f46;"></div>
<div class="t" style="left:993px;top:139.84px;font-size:12px;color:#999999;letter-spacing:-0.180px;">Search Solution Explorer (Ctrl+;)</div>
<svg style="left:1305px;top:138px" width="14" height="14" viewBox="0 0 14 14"><circle cx="9" cy="5" r="3.8" fill="none" stroke="#f1f1f1" stroke-width="1.8"/><path d="M6.3 7.7 L1.3 12.7" stroke="#f1f1f1" stroke-width="2.4" stroke-linecap="round"/></svg>
<svg style="left:1325px;top:143px" width="6" height="4" viewBox="0 0 6 3.5" preserveAspectRatio="none"><path d="M0 0 H6 L3 3.5 Z" fill="#f1f1f1"/></svg>
<div class="a" style="left:988px;top:155px;width:346px;height:523px;background:#252526;border-top:1px solid #3f3f46;"></div>
<div class="a" style="left:988px;top:232px;width:346px;height:19px;background:#3f3f46;"></div>
<svg style="left:1001px;top:163px" width="15" height="15" viewBox="0 0 15 15"><path d="M0.5 5 V0.5 H13.5 V11.5 H8.5" fill="none" stroke="#c8c8c8" stroke-width="1"/><rect x="0.5" y="0.5" width="13" height="1.8" fill="#c8c8c8"/><path d="M5.5 5.3 L8 6.3 V13.2 L5.5 14.2 L2.2 11.3 L1 12 L0 11.5 V8 L1 7.5 L2.2 8.3 Z M5.5 7.6 L3.2 9.8 L5.5 11.9 Z M1 9 V10.7 L1.9 9.8 Z" fill="#c27fd9" fill-rule="evenodd"/></svg>
<div class="t" style="left:1021px;top:163.84px;font-size:12px;color:#f1f1f1;letter-spacing:-0.132px;">Solution 'VietJackCsharp' (1 project)</div>
<svg style="left:999px;top:184px" width="7" height="7" viewBox="0 0 7 7"><path d="M6.5 0.5 V6.5 H0.5 Z" fill="#f1f1f1"/></svg>
<svg style="left:1019px;top:182px" width="14" height="12" viewBox="0 0 14 12"><rect x="0.5" y="0.5" width="13" height="11" fill="#252526" stroke="#7dc67d" stroke-width="1"/><path d="M5.8 3.6 A2.3 2.6 0 1 0 5.8 8.4" fill="none" stroke="#d8d8d8" stroke-width="1.3"/><g fill="#e0e0e0"><rect x="8" y="3" width="1" height="6"/><rect x="10" y="3" width="1" height="6"/><rect x="7" y="4" width="5" height="1"/><rect x="7" y="7" width="5" height="1"/></g></svg>
<div class="t" style="left:1039px;top:181.84px;font-size:12px;color:#f1f1f1;font-weight:bold;letter-spacing:-0.438px;">VietJackCsharp</div>
<svg style="left:1017px;top:201px" width="6" height="10" viewBox="0 0 6 10"><path d="M0.6 0.8 L5.4 5 L0.6 9.2 Z" fill="none" stroke="#f1f1f1" stroke-width="1.1"/></svg>
<svg style="left:1037px;top:199px" width="14" height="14" viewBox="0 0 14 14"><path d="M1.5 12.5 L7 7" stroke="#c8c8c8" stroke-width="2.6" stroke-linecap="round"/><path d="M13.2 3.6 A4.3 4.3 0 1 1 10.4 0.8 L8.5 2.8 L8.5 5.5 L11.2 5.5 Z" fill="#c8c8c8"/></svg>
<div class="t" style="left:1057px;top:199.84px;font-size:12px;color:#f1f1f1;letter-spacing:-0.221px;">Properties</div>
<svg style="left:1017px;top:219px" width="6" height="10" viewBox="0 0 6 10"><path d="M0.6 0.8 L5.4 5 L0.6 9.2 Z" fill="none" stroke="#f1f1f1" stroke-width="1.1"/></svg>
<svg style="left:1037px;top:220px" width="15" height="8" viewBox="0 0 15 8"><rect x="0" y="2" width="4" height="4" fill="#c8c8c8"/><rect x="4" y="3.5" width="3" height="1" fill="#c8c8c8"/><rect x="8" y="0.5" width="7" height="7" fill="#c8c8c8"/></svg>
<div class="t" style="left:1057px;top:217.84px;font-size:12px;color:#f1f1f1;letter-spacing:-0.529px;">References</div>
<svg style="left:1017px;top:238px" width="7" height="7" viewBox="0 0 7 7"><path d="M6.5 0.5 V6.5 H0.5 Z" fill="#f1f1f1"/></svg>
<svg style="left:1037px;top:235px" width="15" height="13" viewBox="0 0 15 13"><path d="M0.5 12.5 V1.5 H5 L6.5 3 H13.5 V5" fill="none" stroke="#dcb67a" stroke-width="1.2"/><path d="M0.5 12.5 L3 5 H14.5 L12.5 12.5 Z" fill="#dcb67a"/></svg>
<div class="t" style="left:1057px;top:235.84px;font-size:12px;color:#f1f1f1;letter-spacing:-0.347px;">NewFolder1</div>
<svg style="left:1035px;top:255px" width="6" height="10" viewBox="0 0 6 10"><path d="M0.6 0.8 L5.4 5 L0.6 9.2 Z" fill="none" stroke="#f1f1f1" stroke-width="1.1"/></svg>
<svg style="left:1057px;top:255px" width="12" height="9" viewBox="0 0 12 9"><path d="M5.3 2.3 A2.4 2.9 0 1 0 5.3 6.7" fill="none" stroke="#7dc67d" stroke-width="2"/><g fill="#7dc67d"><rect x="7" y="0" width="1" height="5"/><rect x="9" y="0" width="1" height="5"/><rect x="6" y="1" width="5" height="1"/><rect x="6" y="3" width="5" height="1"/></g></svg>
<div class="t" style="left:1075px;top:253.84px;font-size:12px;color:#f1f1f1;letter-spacing:-0.727px;">Class1.cs</div>
<svg style="left:1017px;top:273px" width="6" height="10" viewBox="0 0 6 10"><path d="M0.6 0.8 L5.4 5 L0.6 9.2 Z" fill="none" stroke="#f1f1f1" stroke-width="1.1"/></svg>
<svg style="left:1039px;top:273px" width="12" height="9" viewBox="0 0 12 9"><path d="M5.3 2.3 A2.4 2.9 0 1 0 5.3 6.7" fill="none" stroke="#7dc67d" stroke-width="2"/><g fill="#7dc67d"><rect x="7" y="0" width="1" height="5"/><rect x="9" y="0" width="1" height="5"/><rect x="6" y="1" width="5" height="1"/><rect x="6" y="3" width="5" height="1"/></g></svg>
<div class="t" style="left:1057px;top:271.84px;font-size:12px;color:#f1f1f1;letter-spacing:-0.677px;">Class1.cs</div>
<div class="a" style="left:988px;top:678px;width:100px;height:20px;background:#252526;"></div>
<div class="t" style="left:993px;top:681.84px;font-size:12px;color:#0097fb;letter-spacing:-0.155px;">Solution Explorer</div>
<div class="a" style="left:1087px;top:678px;width:248px;height:21px;background:#2d2d30;border-top:1px solid #3f3f46;border-left:1px solid #3f3f46"></div>
<div class="t" style="left:1093px;top:682.84px;font-size:12px;color:#f1f1f1;letter-spacing:-0.574px;">Class View</div>
<div class="a" style="left:1360px;top:85px;width:6px;height:68px;background:#3f3f46;"></div>
<div class="a" style="left:1360px;top:165px;width:6px;height:89px;background:#3f3f46;"></div>
<div class="a" style="left:1342.5px;top:84.5px;width:14px;height:70px"><div style="position:absolute;left:13px;top:0;transform-origin:0 0;transform:rotate(90deg);font-size:12px;line-height:12px;color:#f1f1f1;white-space:nowrap;letter-spacing:0.3px">Notifications</div></div>
<div class="a" style="left:1342.5px;top:164.5px;width:14px;height:90px"><div style="position:absolute;left:13px;top:0;transform-origin:0 0;transform:rotate(90deg);font-size:12px;line-height:12px;color:#f1f1f1;white-space:nowrap;letter-spacing:0.1px">Diagnostic Tools</div></div>
<div class="a" style="left:0px;top:705px;width:1366px;height:23px;background:#007acc;"></div>
<div class="t" style="left:5px;top:710.84px;font-size:12px;color:#ffffff;letter-spacing:-0.847px;">Ready</div>
<svg style="left:1200px;top:710px" width="10" height="13" viewBox="0 0 10 13"><path d="M5 12.5 V1.5 M1 5.5 L5 1.5 L9 5.5" fill="none" stroke="#f1f1f1" stroke-width="1.8"/></svg>
<div class="t" style="left:1219px;top:710.84px;font-size:12px;color:#ffffff;letter-spacing:0.015px;">Add to Source Control</div>
<svg style="left:1342px;top:714px" width="9" height="5" viewBox="0 0 9 5"><path d="M0 5 L4.5 0 L9 5 Z" fill="#ffffff"/></svg>
<div class="a" style="left:0px;top:728px;width:1366px;height:40px;background:#000000;"></div>
<svg style="left:16px;top:740px" width="16" height="16" viewBox="0 0 16 16" fill="#ffffff"><path d="M0 1.8 L6 1 V7 H0 Z M7 0.9 L16 0 V7 H7 Z M0 8 H6 V15 L0 14.2 Z M7 8 H16 V16 L7 15.1 Z"/></svg>
<svg style="left:64px;top:740px" width="17" height="17" viewBox="0 0 17 17"><circle cx="10.5" cy="6.5" r="5.5" fill="none" stroke="#ffffff" stroke-width="1.3"/><path d="M6.5 10.5 L0.8 16.2" stroke="#ffffff" stroke-width="1.5"/></svg>
<svg style="left:110px;top:741px" width="21" height="14" viewBox="0 0 21 14" fill="none" stroke="#ffffff" stroke-width="1.2"><rect x="4.5" y="0.6" width="12" height="12.8"/><path d="M2.5 2.5 H0.6 V11.5 H2.5 M18.5 2.5 H20.4 V11.5 H18.5"/></svg>
<svg style="left:161px;top:737px" width="20" height="22" viewBox="0 0 20 22"><path fill-rule="evenodd" fill="#0078d7" d="M19.5 13.2 H6.3 Q6.8 18 12 18 Q16 18 19 16.2 V20.3 Q16 22 11.5 22 Q2.5 22 2 13.5 Q1.5 8 5 5 Q2 6 0.5 9 Q2 0.5 11 0.5 Q19.8 0.5 19.5 13.2 Z M6.3 10 Q7 6 10.8 6 Q14.5 6 14.8 10 Z"/></svg>
<svg style="left:209px;top:739px" width="22" height="19" viewBox="0 0 22 19"><path d="M0 0.5 Q0 0 1 0 H8 L9.5 2 H21 Q21.5 2 21.5 3 V17 H0 Z" fill="#ffe68f" stroke="#e8b84a" stroke-width="0.6"/><rect x="1" y="0.8" width="7" height="1.6" fill="#f5c542"/><rect x="1.5" y="1" width="2.5" height="1" fill="#8fd3f5"/><path d="M4.5 10 H17.5 V18.5 H14.5 V13.5 H7.5 V18.5 H4.5 Z" fill="#2ea8e8"/></svg>
<svg style="left:257px;top:736px" width="23" height="24" viewBox="0 0 23 24"><path d="M7 6 Q7 0.8 11 0.8 Q15 0.8 15 6 M9 5 Q9.5 1.5 13 1.5 Q16.5 1.5 17 5" fill="none" stroke="#ffffff" stroke-width="1.1"/><path d="M0.5 6 L5 5.3 L22 6 V23.5 L5 21.5 L0.5 20.5 Z" fill="#ffffff"/><path d="M5.5 9.5 L11 9.2 V14 H5.5 Z M12 9.1 L18.5 8.8 V14 H12 Z M5.5 15 H11 V19.5 L5.5 19 Z M12 15 H18.5 V20.3 L12 19.7 Z" fill="#000"/></svg>
<svg style="left:307px;top:741px" width="22" height="15" viewBox="0 0 22 15"><rect x="0" y="0" width="22" height="15" fill="#3aa0e8"/><rect x="1" y="1" width="20" height="13" fill="#8fd0f6"/><circle cx="6.5" cy="6.5" r="4" fill="#1565c0"/><path d="M6.5 6.5 V2.5 A4 4 0 0 1 10.5 6.5 Z" fill="#ffb300"/><rect x="13" y="3" width="6" height="1.5" fill="#1565c0"/><rect x="13" y="6" width="6" height="1.5" fill="#1565c0"/><rect x="13" y="9" width="6" height="1.5" fill="#1565c0"/></svg>
<svg style="left:357px;top:738px" width="20" height="20" viewBox="0 0 20 20"><circle cx="10" cy="10" r="5.2" fill="none" stroke="#ffffff" stroke-width="3.4"/><g fill="#ffffff"><rect x="8.4" y="0.3" width="3.2" height="3.5" transform="rotate(0 10 10)"/><rect x="8.4" y="0.3" width="3.2" height="3.5" transform="rotate(45 10 10)"/><rect x="8.4" y="0.3" width="3.2" height="3.5" transform="rotate(90 10 10)"/><rect x="8.4" y="0.3" width="3.2" height="3.5" transform="rotate(135 10 10)"/><rect x="8.4" y="0.3" width="3.2" height="3.5" transform="rotate(180 10 10)"/><rect x="8.4" y="0.3" width="3.2" height="3.5" transform="rotate(225 10 10)"/><rect x="8.4" y="0.3" width="3.2" height="3.5" transform="rotate(270 10 10)"/><rect x="8.4" y="0.3" width="3.2" height="3.5" transform="rotate(315 10 10)"/></g></svg>
<svg style="left:404px;top:736px" width="23" height="23" viewBox="0 0 23 23"><circle cx="11.5" cy="11.5" r="6.7" fill="#ffffff"/><path d="M11.5 0 V3 M11.5 20 V23 M0 11.5 H3 M20 11.5 H23 M3.4 3.4 L5.5 5.5 M17.5 17.5 L19.6 19.6 M3.4 19.6 L5.5 17.5 M17.5 5.5 L19.6 3.4" stroke="#ffffff" stroke-width="1.2"/></svg>
<svg style="left:454px;top:736.5px" width="23" height="23" viewBox="0 0 23 23"><rect x="0" y="0" width="22.5" height="22" rx="4" fill="#0a8ee8"/><path d="M7 0.5 H18.5 Q22 0.5 22 4 V13 Q22 19 15 19 H9 L4.5 20.5 L6 18.5 Q2.5 17 2.5 12 V5 Q2.5 0.5 7 0.5 Z" fill="#ffffff"/><text x="5.3" y="12.3" font-family="Liberation Sans" font-weight="bold" font-size="7" fill="#0a8ee8" letter-spacing="-0.3">Zalo</text></svg>
<svg style="left:502px;top:736px" width="24" height="24" viewBox="0 0 24 24"><path d="M18.6 3.2 A10.7 10.7 0 1 0 21.2 6.4" fill="none" stroke="#ffffff" stroke-width="2.4"/><path d="M19.5 7.5 L22.3 4.7" stroke="#ffffff" stroke-width="2.2"/><circle cx="12" cy="12" r="3.6" fill="none" stroke="#ffffff" stroke-width="2.9"/></svg>
<svg style="left:551px;top:735.5px" width="25" height="25" viewBox="0 0 25 25"><circle cx="11.8" cy="11.8" r="11.8" fill="#ffffff"/><circle cx="11.8" cy="11.8" r="11" fill="#6ab04c"/><path d="M11.8 11.8 L11.8 0 L24.5 0 L22.8 11.8 Z" fill="#ffffff"/><path d="M14.5 2 L13.2 7.5 M16.5 10 L21.5 8" stroke="#f26522" stroke-width="1.9"/><path d="M15.3 8 L19.5 1 L23 1 Z" fill="#6ab04c"/><circle cx="11.8" cy="11.8" r="3.5" fill="#6ab04c" stroke="#ffffff" stroke-width="1.4"/></svg>
<svg style="left:600px;top:736px" width="23" height="23" viewBox="0 0 23 23"><defs><linearGradient id="wg" x1="0" y1="0" x2="1" y2="0"><stop offset="0" stop-color="#2d5fb8"/><stop offset="0.45" stop-color="#a9c4ee"/><stop offset="1" stop-color="#e8f0fb"/></linearGradient></defs><path d="M3 0.5 H19.5 L20 3 V21.5 L18 22.5 H0.5 V4 Q0.5 0.5 3 0.5 Z" fill="url(#wg)"/><rect x="7" y="3.5" width="15" height="19" fill="#f4f7fc"/><text x="8" y="12" font-family="Liberation Serif" font-style="italic" font-weight="bold" font-size="10" fill="#2b579a">W</text><path d="M16 6.5 H20.5 M16 9.5 H20.5 M8 13.5 H20.5 M8 16.5 H20.5 M8 19.5 H20.5" stroke="#2b579a" stroke-width="1.2"/></svg>
<svg style="left:649px;top:735.5px" width="25" height="25" viewBox="0 0 25 25"><circle cx="11.8" cy="11.8" r="11.8" fill="#ffffff"/><circle cx="11.8" cy="11.8" r="11" fill="#6ab04c"/><path d="M11.8 11.8 L11.8 0 L24.5 0 L22.8 11.8 Z" fill="#ffffff"/><path d="M14.5 2 L13.2 7.5 M16.5 10 L21.5 8" stroke="#f26522" stroke-width="1.9"/><path d="M15.3 8 L19.5 1 L23 1 Z" fill="#6ab04c"/><circle cx="11.8" cy="11.8" r="3.5" fill="#6ab04c" stroke="#ffffff" stroke-width="1.4"/></svg>
<div class="a" style="left:641px;top:765px;width:40px;height:3px;background:#99c9ef;"></div>
<svg style="left:698px;top:738px" width="24" height="19" viewBox="0 0 24 19"><path d="M0 6 L12 0 L24 6 V19 H0 Z" fill="#ffffff"/><path d="M0 6 L18 15.5 L14.5 11 L24 6 Z" fill="#000000"/><path d="M0.6 6.5 L18 15.2" stroke="#000" stroke-width="0.8"/></svg>
<div class="a" style="left:735px;top:728px;width:48px;height:40px;background:#333333;"></div>
<div class="a" style="left:735px;top:765px;width:48px;height:3px;background:#99c9ef;"></div>
<svg style="left:742.4px;top:732.5px" width="35.7" height="31" viewBox="0 0 30 26"><path fill="#865fc5" fill-rule="evenodd" d="M18.8 2.9 L24.1 4.4 L24.1 20.6 L19.2 22.9 L3.9 18.8 L3.9 18.2 L18.8 18.6 Z M4.7 8.6 L5.8 8.1 L9.3 10.8 L14.2 5.9 L16.8 7.1 L16.8 15.8 L14.2 16.9 L9.3 12.2 L5.8 14.9 L4.7 14.4 Z M6.3 9.9 L8.2 11.5 L6.3 13.1 Z M14.6 8.7 L14.6 14.2 L11.2 11.5 Z"/></svg>
<svg style="left:1099px;top:744px" width="13" height="8" viewBox="0 0 13 8"><path d="M0.5 7.5 L6.5 1 L12.5 7.5" fill="none" stroke="#ffffff" stroke-width="1.3"/></svg>
<svg style="left:1121px;top:740px" width="16" height="16" viewBox="0 0 16 16"><rect x="0" y="0" width="16" height="16" fill="#8aa8e8"/><rect x="1" y="1" width="14" height="14" fill="#c7d6f7"/><path d="M11.5 4.5 Q9.5 3 7 3.5 Q4.5 4.5 4.5 8 Q4.5 12 8 12.5 Q10.5 13 12 11.5 M5 8 H10" fill="none" stroke="#3b4fc4" stroke-width="1.3"/></svg>
<svg style="left:1145px;top:742px" width="17" height="12" viewBox="0 0 17 12" fill="none" stroke="#ffffff" stroke-width="1.1"><path d="M1.5 0 V3 M4.5 0 V3 M0.5 3 H5.5 V5 Q5.5 7 3 7 Q0.5 7 0.5 5 Z M3 7 V9"/><rect x="6.5" y="3.5" width="9" height="7"/><rect x="15.5" y="5.5" width="1.3" height="3" fill="#fff"/><rect x="7.5" y="4.5" width="4" height="5" fill="#fff"/></svg>
<svg style="left:1172px;top:742px" width="15" height="13" viewBox="0 0 15 13" fill="none" stroke="#ffffff" stroke-width="1.1"><path d="M0.5 12 Q2 2 13 0.5 M3 12 Q4.5 5 13 3.5 M5.5 12 Q7 7.5 12.5 6.5 M8 12 Q9 10 12 9.5"/><circle cx="12" cy="11.5" r="1.3" fill="#fff" stroke="none"/></svg>
<svg style="left:1193px;top:742px" width="17" height="12" viewBox="0 0 17 12" fill="none" stroke="#ffffff" stroke-width="1.1"><path d="M0.5 4 H3 L7 0.5 V11.5 L3 8 H0.5 Z M9.5 3.5 Q11 6 9.5 8.5 M11.5 2 Q14 6 11.5 10 M13.5 0.5 Q17 6 13.5 11.5"/></svg>
<div class="t" style="left:1219px;top:741.84px;font-size:12px;color:#ffffff;letter-spacing:-1.635px;">ENG</div>
<div class="t" style="left:1260px;top:732.84px;font-size:12px;color:#ffffff;letter-spacing:-0.532px;">9:45 PM</div>
<div class="t" style="left:1255px;top:750.84px;font-size:12px;color:#ffffff;letter-spacing:-0.214px;">8/29/2017</div>
<svg style="left:1324px;top:740px" width="26" height="25" viewBox="0 0 26 25"><path d="M0.5 0 H17.5 V12.5 H8 L4 16.5 V12.5 H0.5 Z" fill="#ffffff"/><path d="M3 3.5 H15 M3 6.5 H15 M3 9.5 H12" stroke="#000" stroke-width="1"/><circle cx="16.5" cy="15.5" r="8.2" fill="#333333" stroke="#000" stroke-width="1.4"/><text x="13.2" y="20" font-family="Liberation Sans" font-size="12" fill="#ffffff">1</text></svg>
<div class="a" style="left:1360px;top:728px;width:1px;height:40px;background:#4a4a4a;"></div>
</body></html>
